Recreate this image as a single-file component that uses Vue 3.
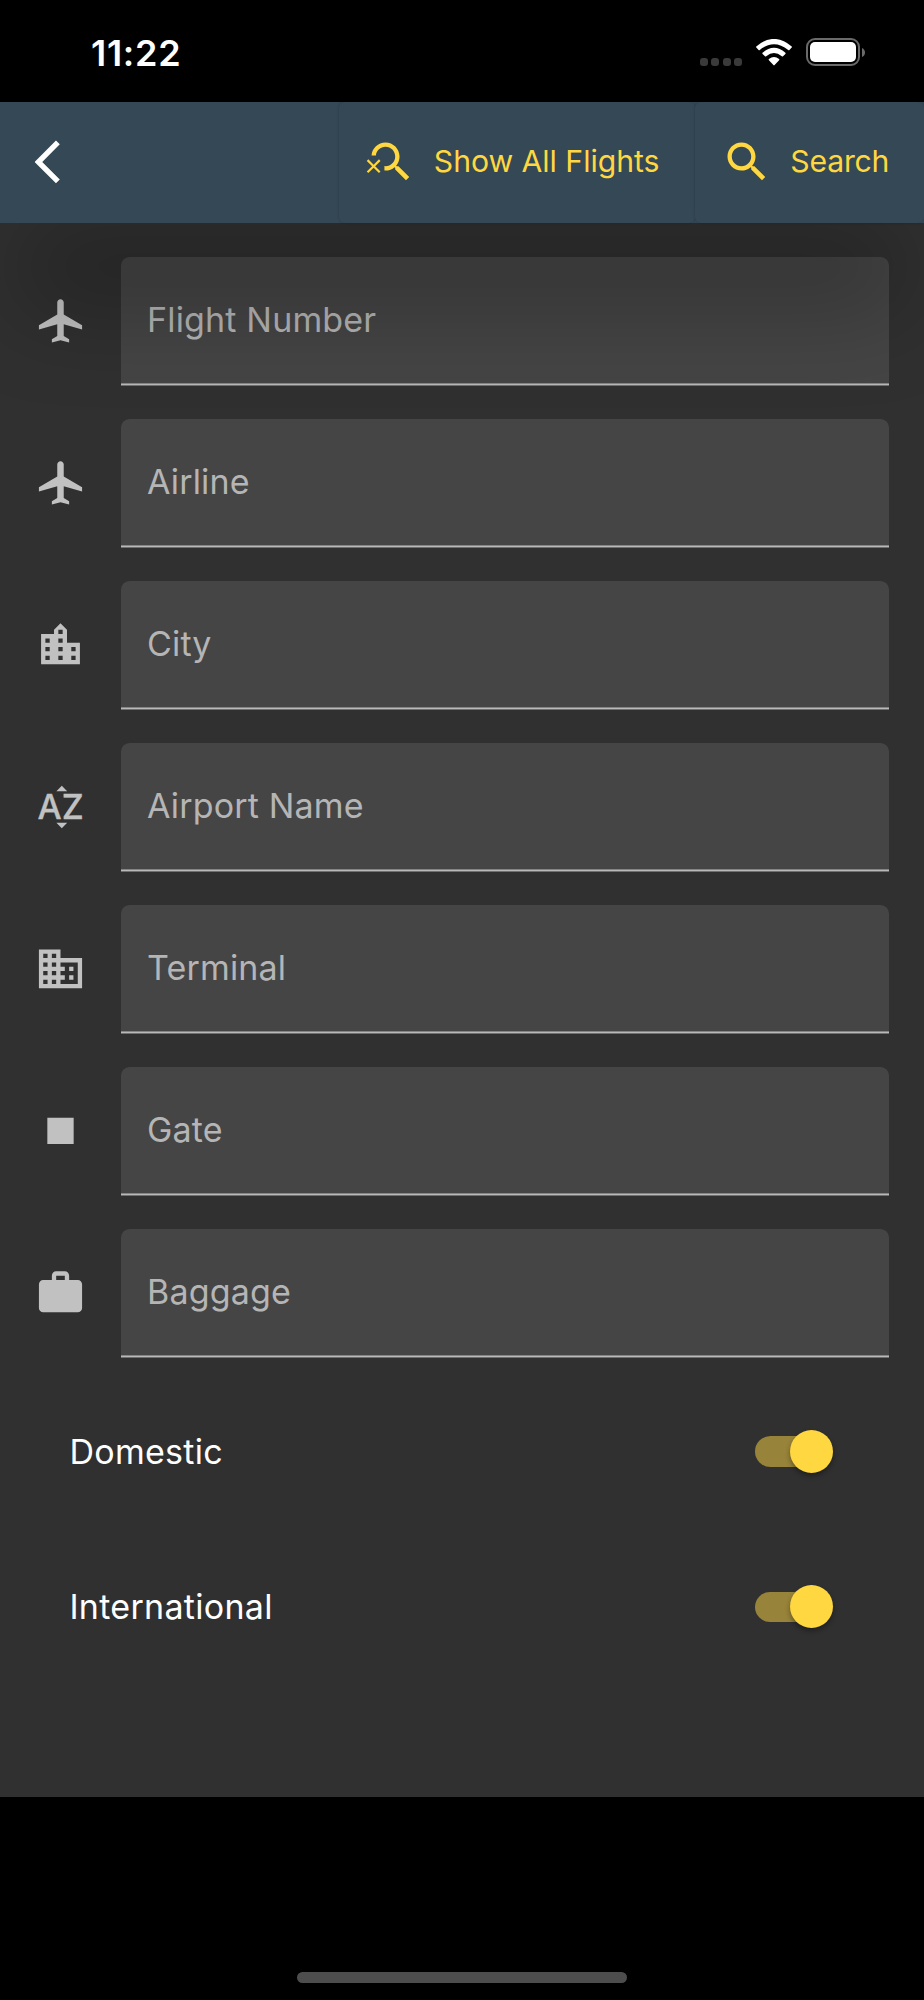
<script setup>
const fields = [
  { label: 'Flight Number', icon: 'plane' },
  { label: 'Airline', icon: 'plane' },
  { label: 'City', icon: 'city' },
  { label: 'Airport Name', icon: 'alpha' },
  { label: 'Terminal', icon: 'domain' },
  { label: 'Gate', icon: 'stop' },
  { label: 'Baggage', icon: 'work' },
]

const icons = {
  plane: 'M22 16v-2l-8.5-5V3.5c0-.83-.67-1.5-1.5-1.5s-1.5.67-1.5 1.5V9L2 14v2l8.5-2.5V19L8 20.5V22l4-1 4 1v-1.5L13.5 19v-5.5L22 16z',
  city: 'M15 11V5l-3-3-3 3v2H3v14h18V11h-6zm-8 8H5v-2h2v2zm0-4H5v-2h2v2zm0-4H5V9h2v2zm6 8h-2v-2h2v2zm0-4h-2v-2h2v2zm0-4h-2V9h2v2zm0-4h-2V5h2v2zm6 12h-2v-2h2v2zm0-4h-2v-2h2v2z',
  alpha: 'M15.1 4.75h-5l2.5-2.55zm-5 14.55h5l-2.5 2.55z',
  domain: 'M12 7V3H2v18h20V7H12zM6 19H4v-2h2v2zm0-4H4v-2h2v2zm0-4H4V9h2v2zm0-4H4V5h2v2zm4 12H8v-2h2v2zm0-4H8v-2h2v2zm0-4H8V9h2v2zm0-4H8V5h2v2zm10 12h-8v-2h2v-2h-2v-2h2v-2h-2V9h8v10zm-2-8h-2v2h2v-2zm0 4h-2v2h2v-2z',
  stop: 'M5.9 5.9h12.2v12.2H5.9z',
  work: 'M20 6h-4V4c0-1.11-.89-2-2-2h-4c-1.11 0-2 .89-2 2v2H4c-1.11 0-1.99.89-1.99 2L2 19c0 1.11.89 2 2 2h16c1.11 0 2-.89 2-2V8c0-1.11-.89-2-2-2zm-6 0h-4V4h4v2z',
}

const switches = ['Domestic', 'International']
</script>

<template>
  <div class="screen">
    <div class="status">
      <span class="time">11:22</span>
      <div class="indicators">
        <div class="dots"><i v-for="n in 4" :key="n"></i></div>
        <svg class="wifi" viewBox="0 0 36 27" width="36" height="27">
          <path d="M0.3 7.4Q18-7.6 35.7 7.4Q36.3 8 35.7 8.6L33.4 10.9Q32.8 11.4 32.2 10.9Q18-.6 3.8 10.9Q3.2 11.4 2.6 10.9L.3 8.6Q-.3 8 .3 7.4Z" />
          <path d="M6.6 13.7Q18 3.9 29.4 13.7Q30 14.3 29.4 14.9L27 17.2Q26.4 17.7 25.8 17.2Q18 11 10.2 17.2Q9.6 17.7 9 17.2L6.6 14.9Q6 14.3 6.6 13.7Z" />
          <path d="M12.9 20Q18 15.9 23.1 20Q23.7 20.6 23.1 21.2L18.6 26.1Q18 26.7 17.4 26.1L12.9 21.2Q12.3 20.6 12.9 20Z" />
        </svg>
        <div class="battery"><div class="charge"></div></div>
        <svg class="cap" viewBox="0 0 3 9" width="3" height="9"><path d="M0 0Q3 1.5 3 4.5T0 9Z" /></svg>
      </div>
    </div>

    <header class="bar">
      <svg class="icon back" viewBox="0 0 24 24"><path d="M11.67 3.87L9.9 2.1 0 12l9.9 9.9 1.77-1.77L3.54 12z" /></svg>
      <button class="action all">
        <svg class="icon" viewBox="0 0 24 24">
          <path d="M15.5 14h-.79l-.28-.27C15.41 12.59 16 11.11 16 9.5 16 5.91 13.09 3 9.5 3 6.08 3 3.28 5.64 3.03 9h2.02C5.3 6.75 7.18 5 9.5 5 11.99 5 14 7.01 14 9.5S11.99 14 9.5 14c-.17 0-.33-.03-.5-.05v2.02c.17.02.33.03.5.03 1.61 0 3.09-.59 4.23-1.57l.27.28v.79l5 4.99L20.49 19l-4.99-5z" />
          <path d="M6.47 10.82L4 13.29l-2.47-2.47-.71.71L3.29 14 .82 16.47l.71.71L4 14.71l2.47 2.47.71-.71L4.71 14l2.47-2.47z" />
        </svg>
        <span>Show All Flights</span>
      </button>
      <button class="action find">
        <svg class="icon" viewBox="0 0 24 24">
          <path d="M15.5 14h-.79l-.28-.27C15.41 12.59 16 11.11 16 9.5 16 5.91 13.09 3 9.5 3S3 5.91 3 9.5 5.91 16 9.5 16c1.61 0 3.09-.59 4.23-1.57l.27.28v.79l5 4.99L20.49 19l-4.99-5zm-6 0C7.01 14 5 11.99 5 9.5S7.01 5 9.5 5 14 7.01 14 9.5 11.99 14 9.5 14z" />
        </svg>
        <span>Search</span>
      </button>
    </header>

    <main class="form">
      <div v-for="f in fields" :key="f.label" class="row">
        <svg class="icon" viewBox="0 0 24 24">
          <path :d="icons[f.icon]" />
          <template v-if="f.icon === 'alpha'">
            <text class="letter" x="1.35" y="17.65" textLength="11.2" lengthAdjust="spacingAndGlyphs">A</text>
            <text class="letter" x="12.6" y="17.65" textLength="10.2" lengthAdjust="spacingAndGlyphs">Z</text>
          </template>
        </svg>
        <div class="field"><span>{{ f.label }}</span></div>
      </div>
      <div class="switches">
        <div v-for="s in switches" :key="s" class="switch-row">
          <span>{{ s }}</span>
          <div class="track"><div class="thumb"></div></div>
        </div>
      </div>
    </main>

    <footer class="home"><div class="home-bar"></div></footer>
  </div>
</template>

<style>
body { background: #000; }
</style>

<style scoped>
.screen {
  width: 924px;
  height: 2000px;
  display: flex;
  flex-direction: column;
  overflow: hidden;
  background: #000;
  font-family: Inter, "Liberation Sans", sans-serif;
}
.status {
  flex: none;
  height: 101.5px;
  display: flex;
  justify-content: space-between;
  padding: 0 59px 0 91px;
  box-sizing: border-box;
}
.time {
  margin-top: 31px;
  line-height: 44px;
  font-size: 36px;
  font-weight: 600;
  letter-spacing: 0.7px;
  color: #fff;
}
.indicators { display: flex; align-items: flex-start; }
.dots { display: flex; gap: 3.7px; margin: 58px 14px 0 0; }
.dots i { width: 7.8px; height: 8px; border-radius: 3px; background: #3a3a3a; }
.wifi { margin: 39px 14px 0 0; fill: #fff; }
.battery {
  width: 54px;
  height: 28px;
  margin-top: 38px;
  box-sizing: border-box;
  padding: 2px;
  border: 2px solid #6a6a6a;
  border-radius: 9px;
}
.charge { height: 100%; border-radius: 5px; background: #fff; }
.cap { margin: 48px 0 0 2px; fill: #6a6a6a; }
.bar {
  position: relative;
  z-index: 1;
  flex: none;
  height: 121px;
  display: flex;
  align-items: center;
  background: #354855;
  box-shadow: 0 104px 95px -18px rgba(0, 0, 0, 0.27);
}
.icon { flex: none; width: 51.8px; height: 51.8px; display: block; fill: currentColor; }
.back { margin-left: 34px; margin-right: auto; color: #fff; transform: translateX(0.6px); }
.action {
  height: 121px;
  display: flex;
  align-items: center;
  box-sizing: border-box;
  border: 0;
  border-radius: 6px;
  background: #354855;
  color: #ffd740;
  font: 400 30.2px/40px Inter, "Liberation Sans", sans-serif;
  letter-spacing: -0.04px;
  white-space: nowrap;
  box-shadow: 0 0 3px rgba(0, 0, 0, 0.2);
}
.action span { margin: 0 0 2px 17px; }
.all { width: 355.5px; padding: 0 0 0 26px; }
.find { width: 229.5px; padding: 0 0 0 26px; }
.find span { margin-left: 18px; letter-spacing: -0.2px; }
.form {
  flex: none;
  height: 1574.5px;
  box-sizing: border-box;
  padding: 34.5px 34.7px 0 34.2px;
  background: #303030;
}
.row { display: flex; align-items: center; height: 129px; margin-bottom: 33px; color: #c1c1c1; }
.row .icon { margin-bottom: 1px; transform: translateX(0.6px); }
.field {
  flex: 1;
  height: 129px;
  margin-left: 35px;
  box-sizing: border-box;
  padding: 0 26px 5px;
  display: flex;
  align-items: center;
  border-radius: 8.6px 8.6px 0 0;
  background: linear-gradient(#454545 126px, #858585 126px 127px, #b9b9b9 127px 128px, #707070 128px);
  color: #b5b5b5;
  font-size: 34px;
  letter-spacing: 0.17px;
}
.letter { font: 500 15.6px Inter, "Liberation Sans", sans-serif; stroke: currentColor; stroke-width: 0.15px; }
.switches { padding: 0 56px 0 35.2px; margin-top: -17.5px; }
.switch-row {
  height: 155.6px;
  display: flex;
  align-items: center;
  justify-content: space-between;
  color: #fff;
  font-size: 34px;
  letter-spacing: 0.3px;
}
.track {
  width: 78.2px;
  height: 30.5px;
  display: flex;
  align-items: center;
  justify-content: flex-end;
  border-radius: 16px;
  background: linear-gradient(90deg, #978339 60px, transparent 60px);
}
.thumb {
  width: 43.2px;
  height: 43.2px;
  flex: none;
  border-radius: 50%;
  background: #ffd740;
  box-shadow: 0 3px 5px rgba(0, 0, 0, 0.35);
}
.home { flex: 1; display: flex; justify-content: center; align-items: flex-end; }
.home-bar { width: 330.5px; height: 11px; margin-bottom: 17.5px; border-radius: 6px; background: #4d4d4d; }
</style>
